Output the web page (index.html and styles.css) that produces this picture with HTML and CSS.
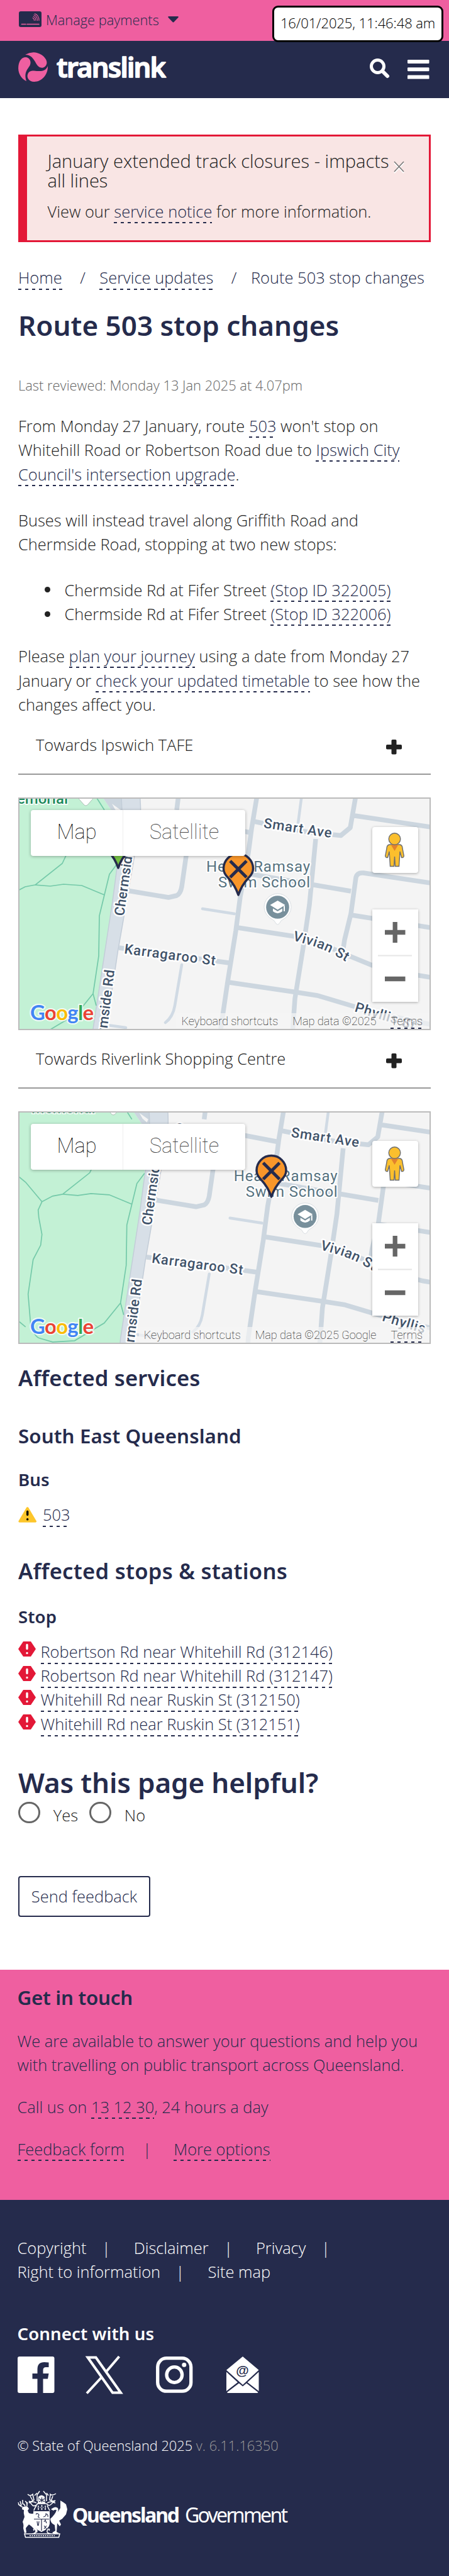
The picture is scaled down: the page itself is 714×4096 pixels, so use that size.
FILE: index.html
```html
<!DOCTYPE html>
<html lang="en">
<head>
<meta charset="utf-8">
<title>Route 503 stop changes | Translink</title>
<link rel="stylesheet" href="styles.css">
</head>
<body>
<svg class="defs" width="0" height="0" aria-hidden="true">
  <defs>
    <g id="streets">
      <path fill="#c3f1d5" d="M-60-20H120L135 1L160 38L157 112L150 165L119 368L117 390H-60Z"/>
      <path fill="#cbd5de" d="M120-20L135 1L160 38H172L165-20Z"/>
      <path fill="#f4f4f4" d="M149 10L163 20L161 25L154 19Z"/>
      <path fill="#d7dfe7" stroke="#c3cdd8" stroke-width="1.5" d="M163-20L165 20Q166 60 157 112L150 165L119 368L117 390H138L140 368L158.500 244L176 144L194 40Q196 20 192-20Z"/>
      <g fill="none" stroke="#ccd6df" stroke-width="7.500" stroke-linejoin="round">
        <path d="M257-20L252 20M268 60L267 93L260 142Q258 153 252 156L239 159L173 148"/>
        <path d="M380-20L379 2L371 50L366 88L353 158L346 212L333 293L322 368L321 390"/>
        <path d="M374 38L460 55L513 60.500L528 48L536 2V-20M535 29L656 47M266 36L370 56"/>
        <path d="M473 66L463 171L453 239L440 320L435 390M359 119L376 123L529 149"/>
        <path d="M656 136L549 120Q539 119 537 127L529 185L519 226L516 246M530 187L656 207"/>
        <path d="M349 207L440 221L490 236L524 251L563 267L600 277L656 286"/>
        <path d="M160 239L335 263M335 294L444 310L476 315L563 341L656 361"/>
      </g>
      <g fill="none" stroke="#d0dae4" stroke-width="4.500" stroke-linecap="round" stroke-linejoin="round">
        <path d="M453-20L445 41M293 177L344 185M260 266L249 331Q246 349 234 358M142 362L171 366"/>
      </g>
      <g fill="none" stroke="#74c9a9" stroke-width="1.700">
        <path d="M118-10L137 20M78 88L70 105L27 139L51 141L72 138L101 140L137 155M27 139L11 142L-6 151L-12 164L-11 176L-6 203L-8 220L-20 243L-28 298L-24 346Q-18 366-10 368L11 374L46 372L93 344L119 312M-6 151L-32 120L-43 111M157 106L145 122L137 155L129 188L128 252L119 312L124 331M-43 341L-32 350"/>
      </g>
      <g class="road-label">
        <text textLength="109" transform="translate(389.500 48) rotate(8.500)">Smart Ave</text>
        <text textLength="146" transform="translate(168 248) rotate(7.500)">Karragaroo St</text>
        <path id="vivian" fill="none" stroke="none" d="M436 227L468 236Q497 245 528 266"/>
        <text><textPath href="#vivian" textLength="92">Vivian St</textPath></text>
        <path id="phyllis" fill="none" stroke="none" d="M534 340L580 354Q610 362 650 380"/>
        <text><textPath href="#phyllis" textLength="99">Phyllis St</textPath></text>
        <text textLength="140" transform="translate(168 189) rotate(-82)">Chermside Rd</text>
        <text textLength="140" text-anchor="end" transform="translate(153 275) rotate(-83)">Chermside Rd</text>
      </g>
      <g class="place-label">
        <text x="464" y="118" text-anchor="end" textLength="165">Heath Ramsay</text>
        <text x="464" y="143" text-anchor="end" textLength="146">Swim School</text>
      </g>
      <text class="park-label" x="79" y="10" text-anchor="end">Memorial</text>
      <path fill="#fff" stroke="#9fb0a8" stroke-width=".8" d="M90-5Q98 4 104 11Q107.500 15 111 11Q117 4 125-5V-20H90Z"/>
      <circle cx="107.500" cy="-14" r="15" fill="#25a06f"/>
      <path fill="#fff" stroke="#cfd6da" stroke-width=".8" d="M412.500 202Q410 202 407 196Q391 187 391 174.500A21.500 21.500 0 0 1 434 174.500Q434 187 418 196Q415 202 412.500 202Z"/>
      <circle cx="412.500" cy="174.500" r="18.300" fill="#78909c"/>
      <path fill="#fff" d="M412.500 164L424.500 171L412.500 178.500L400.500 171ZM405 176.500L412.500 181L420 176.500V181Q412.500 187.500 405 181ZM422 172.500H424V181H422Z"/>
    </g>
    <g id="pin" stroke="#252b4c" stroke-width="3.500" stroke-linejoin="round">
      <path d="M0 0Q-5-15-16-27Q-23.500-34-23.500-42A23.500 23.500 0 0 1 23.500-42Q23.500-34 16-27Q5-15 0 0Z"/>
      <path stroke-width="5" stroke-linecap="butt" d="M-13-54L13-28M13-54L-13-28"/>
    </g>
    <g id="google" class="google-mark">
      <text x="19" y="354" textLength="101"><tspan fill="#4285f4">G</tspan><tspan fill="#ea4335">o</tspan><tspan fill="#fbbc05">o</tspan><tspan fill="#4285f4">g</tspan><tspan fill="#34a853">l</tspan><tspan fill="#ea4335">e</tspan></text>
    </g>
    <g id="pegman" stroke="#6d6d6d" stroke-width="1.400">
      <path fill="#fbbf2d" d="M7 19Q3 20 3 25L.700 37Q1 40 4.500 39.500L7 30L8.500 53.500H14.500L15.500 38L16.500 53.500H22.500L24 30L26.500 39.500Q30 40 30.300 37L28 25Q28 20 24 19Z"/>
      <path fill="#e2822e" stroke="none" d="M9.500 19H21.500L15.500 29Z"/>
      <circle cx="15.500" cy="10" r="9.300" fill="#fbbf2d"/>
    </g>
    <g id="stopsign">
      <path fill="#e31837" d="M8 0H20L28 12L20 24H8L0 12Z"/>
      <path stroke="#fff" stroke-width="3.400" stroke-linecap="round" d="M14 5.500V11.500M14 18.500V18.600"/>
    </g>
    <g id="plus" fill="#222">
      <rect x="8.500" y="0" width="8" height="23.500" rx="1.800"/><rect x="0" y="8" width="25" height="7.500" rx="1.800"/>
    </g>
  </defs>
</svg>

<div class="topbar">
  <svg class="card" width="36" height="25" viewBox="0 0 36 25">
    <rect width="36" height="25" rx="3" fill="#252b4c"/>
    <g fill="none" stroke="#ef5fa0" stroke-linecap="round"><path stroke-width="1.500" d="M4.300 20.500H11M13 20.500H32"/><path stroke-width="1.100" d="M22 10.500Q24.500 11.500 24.500 14.500M23 8.200Q27 9.500 27 14.500M24 5.800Q29.500 8 29.500 14.500M25.200 3.700Q32 6 32 14.500"/></g>
  </svg>
  <span class="manage">Manage payments</span>
  <svg width="17" height="10" viewBox="0 0 17 10"><path fill="#252b4c" d="M1 0H16Q17.500 .500 16.500 1.800L9.300 9.200Q8.500 9.800 7.700 9.200L.500 1.800Q-.500 .500 1 0Z"/></svg>
  <div class="stamp">16/01/2025, 11:46:48 am</div>
</div>

<header class="nav">
  <svg class="logo" width="240" height="50" viewBox="0 0 240 50">
    <g fill="#ef5fa0">
      <path d="M11 4Q18 0 25 .300C38 1 47 12 45.300 18C43.500 25.500 36 27 31 21.500C26.500 16 23 3.500 11 4Z"/>
      <path d="M13 46C4 42-1 32 .300 22C1.500 13 6 8 11.500 8C18 8.200 21.500 15 18.500 21C15 27.500 8.500 32 13 46Z"/>
      <path d="M47 22C47.500 36 37 47.300 25 47C17 47 12.500 40 15.500 34C17.500 30 21 29.300 25 29.500C33 30 43 32.500 47 22Z"/>
    </g>
    <text class="wordmark" x="61" y="40" textLength="174">translink</text>
  </svg>
  <div class="nav-icons">
    <svg width="31" height="31" viewBox="0 0 31 31"><circle cx="12.500" cy="12.500" r="10" fill="none" stroke="#fff" stroke-width="5"/><path d="M20 20L28 28" stroke="#fff" stroke-width="6" stroke-linecap="round"/></svg>
    <svg width="35" height="31" viewBox="0 0 35 31"><g fill="#fff"><rect width="34.500" height="6" rx="1.200"/><rect y="12.300" width="34.500" height="6" rx="1.200"/><rect y="24.600" width="34.500" height="6" rx="1.200"/></g></svg>
  </div>
</header>

<main class="page">
  <section class="alert">
    <div class="alert-body">
      <h2 class="alert-title">January extended track closures - impacts<br>all lines</h2>
      <p>View our <a>service notice</a> for more information.</p>
    </div>
    <svg class="close" width="17" height="20" viewBox="0 0 17 20"><path d="M1 3L16 19M16 3L1 19" stroke="#fff" stroke-width="2"/><path d="M1 1L16 17M16 1L1 17" stroke="#777" stroke-width="1.600"/></svg>
  </section>

  <nav class="crumbs"><a>Home</a><span class="slash">/</span><a>Service updates</a><span class="slash">/</span><span>Route 503 stop changes</span></nav>

  <h1>Route 503 stop changes</h1>
  <p class="reviewed">Last reviewed: Monday 13 Jan 2025 at 4.07pm</p>

  <p class="intro">From Monday 27 January, route <a>503</a> won't stop on<br>Whitehill Road or Robertson Road due to <a>Ipswich City<br>Council's intersection upgrade</a>.</p>
  <p class="para">Buses will instead travel along Griffith Road and<br>Chermside Road, stopping at two new stops:</p>
  <ul class="stops">
    <li>Chermside Rd at Fifer Street <a>(Stop ID 322005)</a></li>
    <li>Chermside Rd at Fifer Street <a>(Stop ID 322006)</a></li>
  </ul>
  <p class="please">Please <a>plan your journey</a> using a date from Monday 27<br>January or <a>check your updated timetable</a> to see how the<br>changes affect you.</p>

  <div class="toggle"><span>Towards Ipswich TAFE</span><svg width="25" height="24"><use href="#plus"/></svg></div>
  <div class="map">
    <svg class="tiles" width="652" height="366" viewBox="2 2 652 366">
      <use href="#streets"/>
      <g fill="#74c043"><use href="#pin" x="159" y="112"/></g>
      <g fill="#f8962a"><use href="#pin" x="350" y="155"/></g>
      <use href="#google"/>
    </svg>
    <div class="map-type"><span class="on">Map</span><span>Satellite</span></div>
    <div class="pegman"><svg width="31" height="55"><use href="#pegman"/></svg></div>
    <div class="zoomer"><svg width="72" height="147"><path stroke="#666" stroke-width="7.300" d="M20 36.500H52.500M36.200 20V53M20 110.500H52.500"/><path stroke="#e6e6e6" stroke-width="1.800" d="M9 73.500H63"/></svg></div>
    <div class="credits"><span>Keyboard shortcuts</span><span>Map data ©2025</span><a>Terms</a></div>
  </div>

  <div class="toggle second"><span>Towards Riverlink Shopping Centre</span><svg width="25" height="24"><use href="#plus"/></svg></div>
  <div class="map">
    <svg class="tiles" width="652" height="366" viewBox="2 2 652 366">
      <use href="#streets" x="43.700" y="-7.200"/>
      <g class="road-label"><text x="248" y="34" transform="rotate(7 248 34)">Cotton</text></g>
      <g fill="#f8962a"><use href="#pin" x="402.500" y="136"/></g>
      <use href="#google"/>
    </svg>
    <div class="map-type"><span class="on">Map</span><span>Satellite</span></div>
    <div class="pegman"><svg width="31" height="55"><use href="#pegman"/></svg></div>
    <div class="zoomer"><svg width="72" height="147"><path stroke="#666" stroke-width="7.300" d="M20 36.500H52.500M36.200 20V53M20 110.500H52.500"/><path stroke="#e6e6e6" stroke-width="1.800" d="M9 73.500H63"/></svg></div>
    <div class="credits"><span>Keyboard shortcuts</span><span>Map data ©2025 Google</span><a>Terms</a></div>
  </div>

  <h2 class="services">Affected services</h2>
  <h3>South East Queensland</h3>
  <h4 class="bus">Bus</h4>
  <div class="route">
    <svg width="30" height="25" viewBox="0 0 30 25"><path fill="#fdc62b" d="M13.300 .800Q14.700-.500 16 .800L29 22.800Q29.500 24.500 27.500 24.700H1.800Q-.200 24.500 .400 22.800Z"/><path stroke="#000" stroke-width="3.400" stroke-linecap="round" d="M14.700 7.500V12.500M14.700 19.800V19.900"/></svg>
    <a>503</a>
  </div>
  <h2 class="stations">Affected stops &amp; stations</h2>
  <h4 class="stop">Stop</h4>
  <ul class="affected">
    <li><svg width="28" height="25"><use href="#stopsign"/></svg><a>Robertson Rd near Whitehill Rd (312146)</a></li>
    <li><svg width="28" height="25"><use href="#stopsign"/></svg><a>Robertson Rd near Whitehill Rd (312147)</a></li>
    <li><svg width="28" height="25"><use href="#stopsign"/></svg><a>Whitehill Rd near Ruskin St (312150)</a></li>
    <li><svg width="28" height="25"><use href="#stopsign"/></svg><a>Whitehill Rd near Ruskin St (312151)</a></li>
  </ul>

  <h2 class="helpful">Was this page helpful?</h2>
  <div class="choices">
    <i class="radio"></i><span class="yes">Yes</span><i class="radio"></i><span>No</span>
  </div>
  <button class="send">Send feedback</button>
</main>

<section class="touch">
  <h3>Get in touch</h3>
  <p class="avail">We are available to answer your questions and help you<br>with travelling on public transport across Queensland.</p>
  <p class="call">Call us on <a>13 12 30</a>, 24 hours a day</p>
  <p class="more"><a>Feedback form</a><span class="bar">|</span><a>More options</a></p>
</section>

<footer class="foot">
  <div class="legal"><span>Copyright</span><i>|</i><span>Disclaimer</span><i>|</i><span>Privacy</span><i>|</i></div>
  <div class="legal"><span>Right to information</span><i>|</i><span>Site map</span></div>
  <h4>Connect with us</h4>
  <div class="social">
    <svg width="59" height="59" viewBox="0 0 59 59"><path fill="#fff" d="M3 0H55.500Q58.500 0 58.500 3V55Q58.500 58 55.500 58H40.500V35.500H48L49.500 27H40.500V21.500Q40.500 17 45 17H49.500V9.500Q46 9 42.500 9Q31.500 9 31.500 20V27H23.500V35.500H31.500V58H3Q0 58 0 55V3Q0 0 3 0Z"/></svg>
    <svg width="60" height="60" viewBox="0 0 60 60"><path fill="none" stroke="#fff" stroke-width="4" d="M3.500 1.500H16.500L56 57.500H43ZM53.500 0L33 24M2 58.500L26 32.500"/></svg>
    <svg width="59" height="59" viewBox="0 0 59 59"><rect x="2.700" y="2.700" width="53" height="52.500" rx="14" fill="none" stroke="#fff" stroke-width="5.300"/><circle cx="29.300" cy="29" r="12.300" fill="none" stroke="#fff" stroke-width="5.300"/><circle cx="44.800" cy="13.300" r="3.500" fill="#fff"/></svg>
    <svg width="52" height="59" viewBox="0 0 52 59"><path fill="#fff" d="M26 0L51.500 21.500L26 45L0 21.500ZM0 24.500L18 41L0 55ZM51.500 24.500L33.500 41L51.500 55ZM20 42.500L26 47.500L32 42.500L50.500 57Q50 58 49 58H2.500Q1.500 58 1 57Z"/><text class="at" x="25.500" y="28.500" text-anchor="middle">@</text></svg>
  </div>
  <p class="rights">© State of Queensland 2025 <span>v. 6.11.16350</span></p>
  <svg class="gov" width="440" height="76" viewBox="0 0 440 76">
    <g fill="#fff" stroke="none">
      <path d="M8 27Q12 25 16 26L18 29L16 32L18 36Q23 38 27 36L26 43L25 50Q27 56 29 60Q33 63 31 67H27L29 64L22 57L18 54Q15 57 13 60L14 67L11 68L9 60Q10 54 8 50L11 42Q9 36 10 31Q5 30 8 27Z"/>
      <path d="M68 16L73 19L77 22L79 30L77 38L71 45L66 48L69 54L67 57L63 52L62 66L66 68L58 69L55 67L60 64L59 55Q52 52 52 45Q60 38 62 31Q59 30 57 32L53 30Q60 24 64 28Q66 32 62 37L68 28Z"/>
      <path d="M25 33H51V53Q50 61 38 66Q26 61 25 53Z"/>
      <path d="M33 10Q38 5 43 10L44 21H32Z"/>
    </g>
    <g fill="none" stroke="#fff" stroke-width="1.500">
      <path d="M1 19Q2 26 11 27M4 17L6 24M8 15L8 21Q12 22 12 27M12 17Q17 20 14 27M16 19L14 22M1 22L6 25"/>
      <path d="M35 1L31 7V17M41 1L46 7V17M31 4L27 8M46 4L49 8M31 21H46M30 24Q26 30 26 32M47 24L51 32M33 24V31M44 24V31M38.500 23V31M35 27H37M40 27H42"/>
      <path d="M16 6Q20 10 24 6L26 15Q22 19 18 17L24 24Q28 26 32 21M61 5Q55 9 52 6L51 15Q56 18 60 16L52 23Q49 25 46 21M20 9L24 16M56 9L53 17M18 20Q24 16 30 20M60 20Q53 16 47 20"/>
      <path d="M11 69H67L65.500 74.500H12.500ZM22 69Q32 68 28 62Q24 60 26 64M54 69Q44 68 48 62Q52 60 50 64"/>
    </g>
    <path fill="none" stroke="#252b4c" stroke-width="1.200" d="M26 45.500H50M38 46V64M29 38Q32 35 34 39Q31 43 35 43M41 42Q46 41 45 37Q49 38 48 42M31 49L32 56M34 49L33 56M42 56L46 61M46 56L42 61M42 50L44 47L46 52M34 13L43 18M43 13L34 18M38.500 11V19M33 27H44"/>
    <path stroke="#fff" stroke-width="1.600" stroke-dasharray="2 1.500" d="M19 71.800H59"/>
    <text class="gov-b" x="87" y="50.500" textLength="171">Queensland</text>
    <text class="gov-r" x="266" y="50.500" textLength="164">Government</text>
  </svg>
</footer>
</body>
</html>
```
FILE: styles.css
```css
:root { --navy: #252b4c; --pink: #ef5fa0; --ink: #222; }
* { box-sizing: border-box; margin: 0; padding: 0; }
body { width: 714px; background: #fff; color: var(--ink); font: 300 25.440px/38.4px "Open Sans", "Liberation Sans", sans-serif; white-space: nowrap; overflow-x: hidden; }
svg { display: block; flex: none; overflow: visible; }
.defs { position: absolute; }
ul { list-style: none; }
h1, h2, h3, h4 { font-family: "Noto Sans", "Open Sans", sans-serif; font-weight: 600; color: var(--navy); }
h1, .helpful { font-size: 44px; line-height: 48.4px; }
h2 { font-size: 34.600px; line-height: 38.5px; letter-spacing: .15px; }
h3 { font-size: 31.300px; line-height: 34px; letter-spacing: .1px; }
h4 { font-size: 27.600px; line-height: 30px; letter-spacing: .1px; }
a { color: var(--navy); padding-bottom: 2px; background: repeating-linear-gradient(90deg, var(--navy) 0 5.450px, transparent 5.450px 10.900px) 0 100% / 100% 2px no-repeat; -webkit-box-decoration-break: clone; box-decoration-break: clone; }

.topbar { display: flex; align-items: flex-start; height: 65.400px; background: var(--pink); color: var(--navy); padding: 17.500px 9px 0 30px; }
.manage { flex: none; width: 180px; font-size: 21.800px; line-height: 28px; margin: 0 14px 0 7px; }
.card { flex: none; }
.topbar > svg:nth-of-type(2) { margin-top: 8px; }
.stamp { position: relative; z-index: 1; margin: -8.300px 0 0 auto; width: 272px; height: 58.100px; border: 3.600px solid #000; border-radius: 9px; background: #fff; color: #000; font-size: 22px; line-height: 49px; text-align: center; letter-spacing: -.1px; }
.nav { display: flex; justify-content: space-between; height: 91px; background: var(--navy); padding: 17.600px 31px 0 29px; }
.logo { height: 50px; }
.wordmark { font: 600 43.500px "Noto Sans", sans-serif; fill: #fff; stroke: #fff; stroke-width: 1.500px; stroke-linejoin: round; }
.nav-icons { display: flex; gap: 29.500px; padding-top: 10px; }
.nav-icons svg:last-child { margin-top: 2.500px; }

.page { padding: 58px 29px 83.700px; height: 2976.100px; }
.alert { display: flex; justify-content: space-between; height: 171.100px; padding: 24.100px 39px 0 32.500px; background: #f9e5e4; border: 3.600px solid #e31837; border-left-width: 14.500px; }
.alert-body { width: 548px; }
.alert-title { font: 300 29.070px/30.8px "Open Sans", sans-serif; letter-spacing: 0; color: var(--ink); margin-bottom: 14px; }
.close { margin-top: 15px; }
.crumbs { display: flex; align-items: center; height: 38.400px; margin-top: 36.400px; color: var(--navy); }
.crumbs a { line-height: 33px; padding-bottom: 3px; margin-top: 3px; }
.slash { margin: 0 22.500px 0 28.500px; }
h1 { margin-top: 32.900px; }
.reviewed { font-size: 21.900px; line-height: 35px; color: #666; margin-top: 53.900px; }
.intro { margin-top: 27.500px; }
.para { margin-top: 34.500px; }
.stops { margin: 34.300px 0 28.700px 73.500px; }
.stops li { position: relative; }
.stops li::before { content: ""; position: absolute; left: -31.500px; top: 14.500px; width: 9px; height: 9px; border-radius: 50%; background: var(--ink); }
.toggle { display: flex; justify-content: space-between; height: 67.200px; margin-top: 25px; padding: 0 46px 0 28px; border-bottom: 2px solid #999; }
.toggle svg { margin-top: 11.500px; }
.toggle.second { margin-top: 25.600px; }

.map { position: relative; height: 370.400px; margin-top: 36px; border: 2px solid #bbb; background: #f4f4f4; overflow: hidden; }
.road-label { font: 500 22px Roboto, sans-serif; fill: #3f5269; stroke: #fff; stroke-width: 5px; stroke-linejoin: round; paint-order: stroke; }
.place-label { font: 400 24px Roboto, sans-serif; fill: #567280; stroke: #fff; stroke-width: 4px; stroke-linejoin: round; paint-order: stroke; }
.park-label { font: 500 24px Roboto, sans-serif; fill: #1c8a5c; stroke: #fff; stroke-width: 3px; paint-order: stroke; }
.google-mark { font: 700 33px Lato, sans-serif; stroke: #fff; stroke-opacity: .8; stroke-width: 4px; stroke-linejoin: round; paint-order: stroke; }
.map-type { position: absolute; left: 18px; top: 18px; display: flex; width: 341px; height: 73px; border-radius: 4px; background: #fff; box-shadow: 0 1px 5px rgba(0,0,0,.3); font: 100 32.700px/71px Roboto, sans-serif; color: #444; text-align: center; }
.map-type span { flex: 1; }
.map-type .on { flex: none; width: 147px; color: #000; border-right: 1px solid #eee; }
.pegman { position: absolute; left: 561px; top: 45px; width: 73px; height: 73px; padding: 9px 0 0 20px; border-radius: 4px; background: #fff; box-shadow: 0 1px 4px rgba(0,0,0,.3); }
.zoomer { position: absolute; left: 561px; top: 176px; width: 73px; height: 147px; background: #fff; box-shadow: 0 1px 4px rgba(0,0,0,.3); }
.credits { position: absolute; right: 0; bottom: 0; display: flex; gap: 23px; height: 25.500px; padding: 0 11px 0 8px; background: rgba(245,245,245,.7); font: 100 18.170px/25px Roboto, sans-serif; color: #000; }
.credits a { color: #000; padding: 0; }

.services { margin-top: 34.500px; }
.page h3 { margin-top: 56.200px; }
.bus { margin-top: 36.600px; }
.route { display: flex; gap: 9px; align-items: center; height: 38.400px; margin-top: 21.900px; }
.route a, .affected a { line-height: 33px; padding-bottom: 3px; margin-top: 3px; }
.stations { margin-top: 51.500px; letter-spacing: .25px; }
.stop { margin-top: 37.700px; }
.affected { margin-top: 21.800px; }
.affected li { display: flex; gap: 7.500px; height: 38.400px; align-items: center; }
.affected svg { margin-top: -6px; }
.helpful { margin-top: 50.100px; letter-spacing: -.15px; }
.choices { display: flex; margin-top: 5.700px; height: 34.800px; line-height: 43px; }
.radio { width: 34.800px; height: 34.800px; border: 3.700px solid #666; border-radius: 50%; margin-right: 21px; }
.yes { margin-right: 18px; }
.send { display: block; margin-top: 83.500px; width: 210px; height: 65.500px; border: 2px solid var(--navy); border-radius: 4px; background: #fff; color: var(--navy); font: inherit; text-align: center; }

.touch { height: 365.500px; padding: 27px 27.500px 0; background: var(--pink); color: var(--navy); }
.touch h3 { letter-spacing: -.25px; }
.avail { margin-top: 32.200px; }
.call { margin-top: 28.600px; }
.more { margin-top: 28.900px; }
.bar { margin: 0 35.500px 0 29px; }

.foot { height: 598px; padding: 56.900px 27.500px 0; background: var(--navy); color: #fff; }
.legal { display: flex; line-height: 38px; height: 38px; }
.legal i { font-style: normal; margin: 0 37px 0 24.500px; }
.foot h4 { color: #fff; margin-top: 64.300px; }
.social { display: flex; margin-top: 22px; height: 58.200px; }
.social svg:nth-child(1) { margin-right: 49.200px; }
.social svg:nth-child(2) { margin-right: 52px; }
.social svg:nth-child(3) { margin-right: 53px; }
.at { font: 700 21px "Liberation Sans", sans-serif; fill: var(--navy); }
.rights { font-size: 21.800px; line-height: 34px; margin-top: 66.500px; }
.rights span { color: #999; }
.gov { margin-top: 54.400px; }
.gov-b { font: 700 32px "Noto Sans", sans-serif; fill: #fff; }
.gov-r { font: 400 32px "Noto Sans", sans-serif; fill: #fff; }
```
